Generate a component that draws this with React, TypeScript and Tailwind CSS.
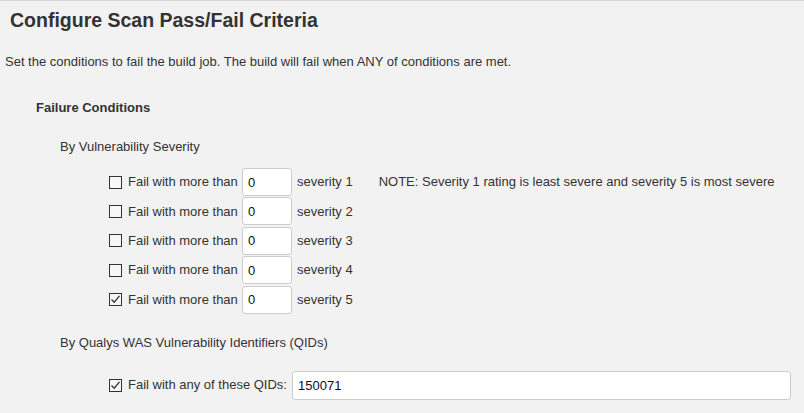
import React from 'react';

const Box = ({ checked }: { checked?: boolean }) => (
  <span className="flex h-[13px] w-[13px] shrink-0 items-center justify-center border border-[#333] bg-[#f7f7f7]">
    {checked && (
      <svg width="11" height="11" viewBox="0 0 11 11" fill="none">
        <path d="M1.5 5.5 L4.2 8.2 L9.5 1.8" stroke="#333" strokeWidth="1.3" />
      </svg>
    )}
  </span>
);

const severities = [
  { level: 1, checked: false },
  { level: 2, checked: false },
  { level: 3, checked: false },
  { level: 4, checked: false },
  { level: 5, checked: true },
];

export default function App() {
  return (
    <div
      className="min-h-[413px] w-full border-t border-[#d4d4d4] bg-[#f2f2f2] text-[13px] text-[#333]"
      style={{ fontFamily: '"Liberation Sans", Arial, sans-serif' }}
    >
      <h1 className="pt-[8px] pl-[10px] text-[19.5px] leading-[22px] font-bold">
        Configure Scan Pass/Fail Criteria
      </h1>

      <p className="mt-[23px] pl-[5px] leading-[16px]">
        Set the conditions to fail the build job. The build will fail when ANY of conditions are met.
      </p>

      <h2 className="mt-[30px] pl-[36px] leading-[16px] font-bold">Failure Conditions</h2>

      <div className="mt-[23px] pl-[60px] leading-[16px]">By Vulnerability Severity</div>

      {/* severity rows */}
      <div className="mt-[13px] flex flex-col gap-[1.4px] pl-[109px]">
        {severities.map((s) => (
          <div key={s.level} className="flex h-[28px] items-center whitespace-nowrap">
            <Box checked={s.checked} />
            <span className="ml-[6px] w-[109px] shrink-0">Fail with more than</span>
            <input
              readOnly
              value="0"
              className="ml-[5px] h-[28px] w-[50px] shrink-0 rounded-[3px] border border-[#ccc] bg-white px-[5px] text-[13px] text-[#111] outline-none"
            />
            <span className="ml-[5px]">severity {s.level}</span>
            {s.level === 1 && (
              <span className="ml-[26px]">
                NOTE: Severity 1 rating is least severe and severity 5 is most severe
              </span>
            )}
          </div>
        ))}
      </div>

      <div className="mt-[21px] pl-[60px] leading-[16px]">By Qualys WAS Vulnerability Identifiers (QIDs)</div>

      <div className="mt-[20px] flex h-[29px] items-center whitespace-nowrap pl-[109px]">
        <Box checked />
        <span className="ml-[6px] w-[159px] shrink-0">Fail with any of these QIDs:</span>
        <input
          readOnly
          value="150071"
          className="ml-[5px] h-[29px] w-[499px] rounded-[3px] border border-[#ccc] bg-white px-[5px] text-[13px] text-[#111] outline-none"
        />
      </div>
    </div>
  );
}
